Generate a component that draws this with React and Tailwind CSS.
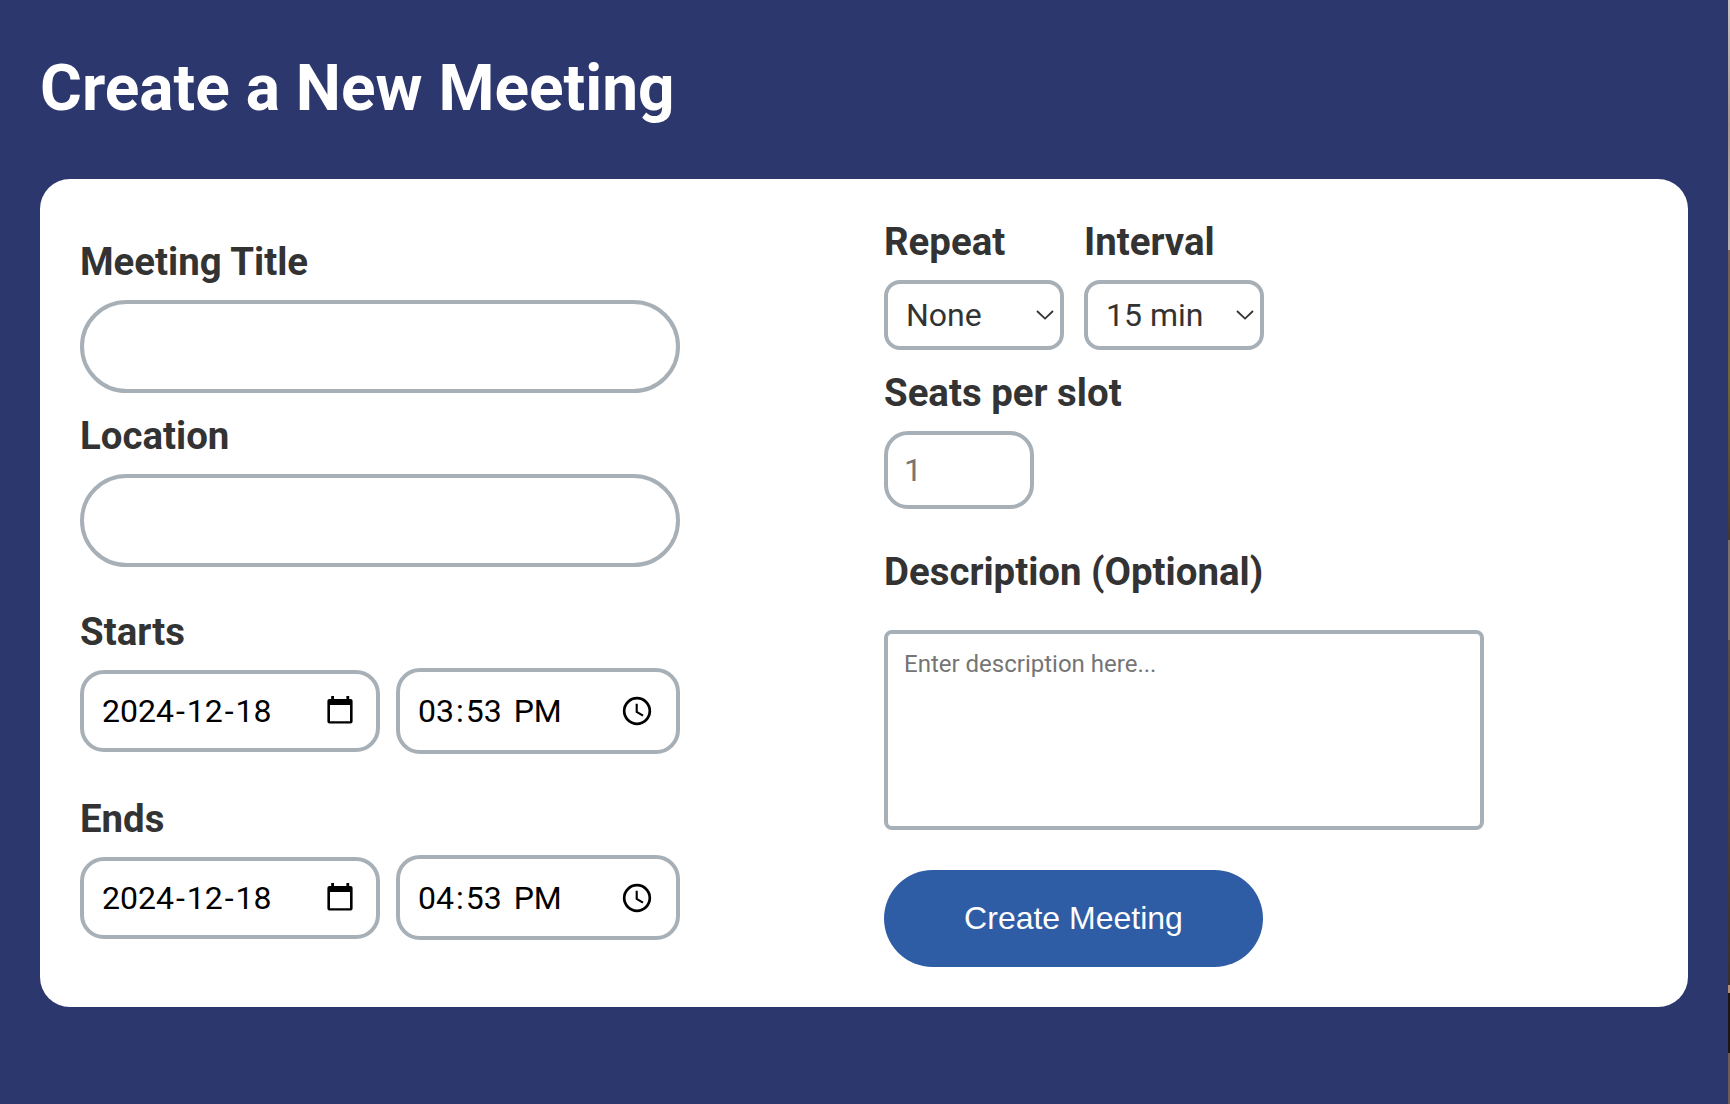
import React from "react";

function Label({ children, className = "" }) {
  return (
    <label className={`block whitespace-nowrap text-[38.4px] leading-[44px] font-bold text-[#333333] ${className}`}>
      {children}
    </label>
  );
}

function CalendarIcon() {
  return (
    <svg className="block h-8 w-8 shrink-0" viewBox="0 0 32 32" fill="none">
      <path d="M7.2 1h2.8v3h12.4V1h2.8v3h1.4a2 2 0 0 1 2 2v20.4a2 2 0 0 1-2 2H5.4a2 2 0 0 1-2-2V6a2 2 0 0 1 2-2H7.2zM6 10v16.2h20V10z" fill="#000" fillRule="evenodd" />
    </svg>
  );
}

function ClockIcon() {
  return (
    <svg className="block h-8 w-8 shrink-0" viewBox="0 0 32 32" fill="none" stroke="#000">
      <circle cx="16" cy="16" r="12.8" strokeWidth="2.7" />
      <path d="M15.7 8.8v8l6.3 3.8" strokeWidth="2.1" />
    </svg>
  );
}

function Chevron() {
  return (
    <svg className="block h-[10px] w-[18px] shrink-0" viewBox="0 0 18 10" fill="none" stroke="#333" strokeWidth="1.8">
      <path d="M1 1l8 7.6L17 1" />
    </svg>
  );
}

function Segments({ parts }) {
  return (
    <span className="flex whitespace-pre text-[32px] leading-[38px] text-black">
      {parts.map((p, i) => (
        <span key={i} className={/\d|M/.test(p) ? "px-[2px]" : ""}>{p}</span>
      ))}
    </span>
  );
}

function DateTime({ time, timeHeight }) {
  return (
    <div className="flex h-[86px] w-[600px] items-start gap-4">
      <div className="mt-[2px] flex h-[82px] w-[300px] items-center justify-between rounded-[24px] border-4 border-[#a8b0b7] pr-[20px] pb-px pl-[16px]">
        <Segments parts={["2024", "-", "12", "-", "18"]} />
        <CalendarIcon />
      </div>
      <div className={`flex w-[284px] items-center justify-between rounded-[24px] border-4 border-[#a8b0b7] pr-[23px] pl-[16px] ${timeHeight}`}>
        <Segments parts={[time[0], ":", time[1], " ", "PM"]} />
        <ClockIcon />
      </div>
    </div>
  );
}

function Select({ children }) {
  return (
    <div className="mt-4 flex h-[70px] w-[180px] items-center justify-between rounded-[16px] border-4 border-[#a8b0b7] pr-[6px] pl-[18px] text-[32px] leading-[38px] text-[#333333]">
      <span>{children}</span>
      <Chevron />
    </div>
  );
}

export default function App() {
  return (
    <div className="flex h-[1104px] w-[1730px] overflow-hidden font-[Roboto,sans-serif]">
      <main className="w-[1728px] shrink-0 bg-[#2c376e] px-10 pt-[52px]">
        <h1 className="text-[64px] leading-[74px] font-bold whitespace-nowrap text-white">Create a New Meeting</h1>
        <form className="mt-[53px] flex h-[828px] w-[1648px] rounded-[30px] bg-white pl-10">
          <section className="w-[804px] pt-[61px]">
            <Label>Meeting Title</Label>
            <input className="mt-4 block h-[93px] w-[600px] rounded-full border-4 border-[#a8b0b7] px-6 text-[32px]" />
            <Label className="mt-[21px]">Location</Label>
            <input className="mt-4 block h-[93px] w-[600px] rounded-full border-4 border-[#a8b0b7] px-6 text-[32px]" />
            <Label className="mt-[43px] mb-[14px]">Starts</Label>
            <DateTime time={["03", "53"]} timeHeight="h-[86px] pb-px" />
            <Label className="mt-[43px] mb-[14px]">Ends</Label>
            <DateTime time={["04", "53"]} timeHeight="h-[85px]" />
          </section>
          <section className="pt-[41px]">
            <div className="flex gap-5">
              <div className="w-[180px]">
                <Label>Repeat</Label>
                <Select>None</Select>
              </div>
              <div className="w-[180px]">
                <Label>Interval</Label>
                <Select>15 min</Select>
              </div>
            </div>
            <Label className="mt-[21px]">Seats per slot</Label>
            <input placeholder="1" className="mt-4 block h-[78px] w-[150px] rounded-[24px] border-4 border-[#a8b0b7] px-4 text-[32px] leading-[38px] placeholder:text-[#757575]" />
            <Label className="mt-[41px]">Description (Optional)</Label>
            <textarea placeholder="Enter description here..." className="mt-9 block h-[200px] w-[600px] resize-none rounded-[8px] border-4 border-[#a8b0b7] px-4 py-[16px] text-[24px] leading-[28px] placeholder:text-[#757575]" />
            <button type="button" className="mt-10 block h-[97px] w-[379px] rounded-full bg-[#2e5da6] font-['Liberation_Sans',Arial,sans-serif] text-[32px] leading-[37px] text-white">
              Create Meeting
            </button>
          </section>
        </form>
      </main>
      <div className="flex w-[2px] shrink-0 flex-col">
        <div className="h-[250px] bg-linear-to-b from-[#c9c3c1] via-[#a3948c] to-[#b8b0ae]" />
        <div className="h-[130px] bg-linear-to-b from-[#75605a] to-[#6e6536]" />
        <div className="h-[160px] bg-linear-to-b from-[#6e6536] to-[#453830]" />
        <div className="h-[100px] bg-[#7c716a]" />
        <div className="h-[345px] bg-linear-to-b from-[#5a4e49] to-[#3a302b]" />
        <div className="h-[8px] bg-[#b08f74]" />
        <div className="h-[60px] bg-[#1d1613]" />
        <div className="grow bg-[#705c56]" />
      </div>
    </div>
  );
}
